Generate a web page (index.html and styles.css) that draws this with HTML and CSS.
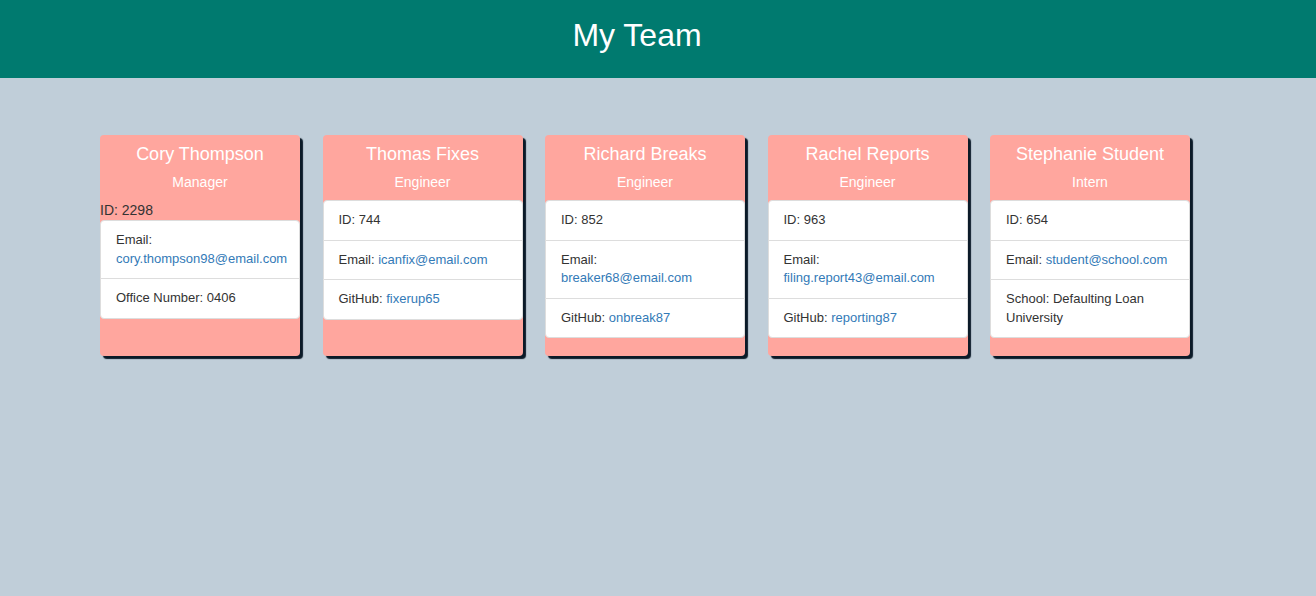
FILE: index.html
```html
<!DOCTYPE html>
<html lang="en">
<head>
<meta charset="utf-8">
<title>My Team</title>
<link rel="stylesheet" href="styles.css">
</head>
<body>
<header class="topbar"><h1 class="title">My Team</h1></header>
<main class="team">
  <div class="card">
    <div class="card-head"><h2 class="name">Cory Thompson</h2><p class="role">Manager</p></div>
    <p class="loose-id">ID: 2298</p>
    <ul class="list">
      <li class="item">Email: <a class="link" href="#">cory.thompson98@email.com</a></li>
      <li class="item">Office Number: 0406</li>
    </ul>
  </div>
  <div class="card">
    <div class="card-head"><h2 class="name">Thomas Fixes</h2><p class="role">Engineer</p></div>
    <ul class="list">
      <li class="item">ID: 744</li>
      <li class="item">Email: <a class="link" href="#">icanfix@email.com</a></li>
      <li class="item">GitHub: <a class="link" href="#">fixerup65</a></li>
    </ul>
  </div>
  <div class="card">
    <div class="card-head"><h2 class="name">Richard Breaks</h2><p class="role">Engineer</p></div>
    <ul class="list">
      <li class="item">ID: 852</li>
      <li class="item">Email: <a class="link" href="#">breaker68@email.com</a></li>
      <li class="item">GitHub: <a class="link" href="#">onbreak87</a></li>
    </ul>
  </div>
  <div class="card">
    <div class="card-head"><h2 class="name">Rachel Reports</h2><p class="role">Engineer</p></div>
    <ul class="list">
      <li class="item">ID: 963</li>
      <li class="item">Email: <a class="link" href="#">filing.report43@email.com</a></li>
      <li class="item">GitHub: <a class="link" href="#">reporting87</a></li>
    </ul>
  </div>
  <div class="card">
    <div class="card-head"><h2 class="name">Stephanie Student</h2><p class="role">Intern</p></div>
    <ul class="list">
      <li class="item">ID: 654</li>
      <li class="item">Email: <a class="link" href="#">student@school.com</a></li>
      <li class="item">School: Defaulting Loan University</li>
    </ul>
  </div>
</main>
</body>
</html>
```
FILE: styles.css
```css
* { box-sizing: border-box; }
html, body { margin: 0; padding: 0; }
body {
  background: #c0ced9;
  font-family: "Liberation Sans", Arial, sans-serif;
  font-size: 14px;
  line-height: 20px;
  color: #333;
  height: 596px;
}
.topbar {
  background: #007a6f;
  height: 78px;
  display: flex;
  align-items: center;
  justify-content: center;
  padding-right: 42px;
}
.title {
  margin: 0 0 8px 0;
  font-size: 32px;
  font-weight: normal;
  color: #fff;
  line-height: 36px;
}
.team {
  display: flex;
  gap: 22.5px;
  padding: 57px 0 0 100px;
  align-items: stretch;
}
.card {
  width: 200px;
  flex: none;
  background: #ffa69e;
  border-radius: 4px;
  box-shadow: 3px 3px 1px #0b1a28;
  padding-bottom: 18px;
}
.card-head {
  padding: 8px 4px 8px;
  text-align: center;
  color: #fff;
}
.name {
  margin: 0;
  font-size: 18px;
  font-weight: normal;
  line-height: 22px;
}
.role {
  margin: 7px 0 0;
  font-size: 14px;
  line-height: 20px;
}
.loose-id {
  margin: 0;
  font-size: 14px;
  line-height: 20px;
}
.list {
  list-style: none;
  margin: 0;
  padding: 0;
}
.item {
  background: #fff;
  border: 1px solid #ddd;
  padding: 10px 15px;
  margin-bottom: -1px;
  font-size: 13px;
  line-height: 1.42857;
}
.item:first-child { border-radius: 4px 4px 0 0; }
.item:last-child { border-radius: 0 0 4px 4px; margin-bottom: 0; }
.link { color: #337ab7; text-decoration: none; }
```
